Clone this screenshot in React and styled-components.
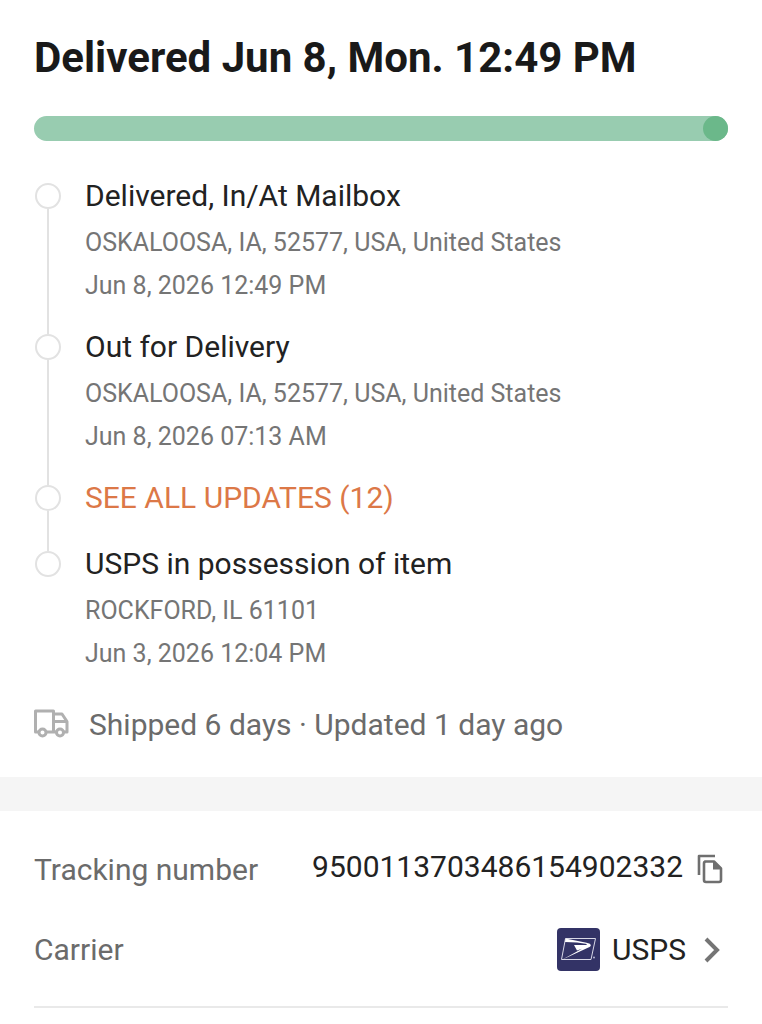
import React from 'react';
import styled, { createGlobalStyle } from 'styled-components';

const GlobalStyle = createGlobalStyle`
  body {
    margin: 0;
    background: #fff;
    color: #222;
    font-family: Roboto, "Liberation Sans", sans-serif;
  }
`;
const Section = styled.section`
  padding: ${(props) => props.$padding};
`;
const Heading = styled.h1`
  margin: 0;
  font-size: 42px;
  line-height: 50px;
  font-weight: 700;
  color: #191919;
`;
const Track = styled.div`
  display: flex;
  justify-content: flex-end;
  height: 25px;
  margin-top: 33px;
  border-radius: 13px;
  background: #98ccb0;
`;
const Knob = styled.span`
  width: 25px;
  height: 25px;
  border-radius: 50%;
  background: #6bb88a;
`;
const Timeline = styled.ol`
  list-style: none;
  margin: 35px 0 0;
  padding: 0;
`;
const Step = styled.li`
  display: flex;
  gap: 24px;
`;
const Rail = styled.div`
  display: flex;
  flex-direction: column;
  align-items: center;
  width: 27px;
`;
const Line = styled.span`
  width: 2px;
  height: 7px;
  flex-grow: ${(props) => (props.$grow ? 1 : 0)};
  background: ${(props) => (props.$hidden ? 'transparent' : '#e2e2e2')};
`;
const Dot = styled.span`
  box-sizing: border-box;
  width: 26px;
  height: 26px;
  flex-shrink: 0;
  border: 2px solid #e2e2e2;
  border-radius: 50%;
`;
const StepBody = styled.div`
  flex: 1;
  padding-bottom: ${(props) => props.$gap}px;
`;
const StepTitle = styled.h2`
  margin: 0 0 5px;
  font-size: 30px;
  line-height: 40px;
  font-weight: 400;
`;
const StepDetail = styled.p`
  margin: 0;
  font-size: 25px;
  line-height: 43px;
  color: #757575;
`;
const SeeAll = styled.button`
  display: block;
  padding: 0;
  border: 0;
  background: none;
  color: #dc7847;
  font: inherit;
  font-size: 30px;
  line-height: 40px;
  cursor: pointer;
`;
const Summary = styled.p`
  display: flex;
  align-items: center;
  gap: 20px;
  margin: 30px 0 0;
  font-size: 30px;
  line-height: 40px;
  color: #6b6b6b;
`;
const Divider = styled.div`
  height: 34px;
  background: #f5f5f5;
`;
const Details = styled.dl`
  margin: 0;
  padding-bottom: 35px;
  border-bottom: 2px solid #e9e9e9;
  font-size: 30px;
  line-height: 40px;
`;
const DetailRow = styled.div`
  display: flex;
  justify-content: space-between;
  align-items: ${(props) => props.$align || 'center'};
  & + & {
    margin-top: 38px;
  }
`;
const Label = styled.dt`
  color: #6b6b6b;
`;
const Value = styled.dd`
  display: flex;
  align-items: flex-end;
  gap: 14px;
  margin: 0;
  line-height: 34px;
`;
const CopyButton = styled.button`
  display: flex;
  padding: 0 5px 0 0;
  border: 0;
  background: none;
  cursor: pointer;
`;
const CarrierLink = styled.a`
  display: flex;
  align-items: center;
  gap: 12px;
  color: inherit;
  text-decoration: none;
`;

const TruckIcon = () => (
  <svg width="35" height="32" viewBox="0 0 35 32" fill="none" stroke="#b0b0b0" strokeWidth="3" strokeLinejoin="round" aria-hidden="true">
    <path d="M5 23H1.500V2H19.500v21M12.500 23h10M19.500 5h8.500l5 7.500V23h-3M19.500 12.500H33" />
    <circle cx="8.500" cy="23.500" r="3.500" />
    <circle cx="26" cy="23.500" r="3.500" />
  </svg>
);

const CopyIcon = () => (
  <svg width="26" height="30" viewBox="0 0 26 30" fill="none" stroke="#6f6f6f" strokeWidth="2.600" strokeLinejoin="round" aria-hidden="true">
    <path d="M2 21V2h16" />
    <path d="M8 7.500h9l7 7V26q0 2-2 2H9q-2 0-2-2V9.500q0-2 2-2z" />
    <path d="M16 7v8.500h8.500z" fill="#6f6f6f" stroke="none" />
  </svg>
);

const UspsLogo = () => (
  <svg width="43" height="43" viewBox="0 0 43 43" aria-hidden="true">
    <rect width="43" height="43" rx="4" fill="#333366" />
    <path d="M8.500 10.500H38.500L34 31.500H4.500z" fill="none" stroke="#d8d8e6" strokeWidth="1" />
    <path d="M8.500 10.500l21 4.200c4.500.9 5.500 2.800 3 4.300L5 31.800l20-11-5 1.700-3-5.500h12c1.500-.3 1-1-.5-1.300L20 14.500l-12-.5z" fill="#fff" />
    <circle cx="37" cy="29.500" r="1" fill="#b8b8d0" />
  </svg>
);

const ChevronIcon = () => (
  <svg width="30" height="30" viewBox="0 0 30 30" fill="none" stroke="#757575" strokeWidth="4" aria-hidden="true">
    <path d="M8 4l11 11L8 26" />
  </svg>
);

const steps = [
  { title: 'Delivered, In/At Mailbox', place: 'OSKALOOSA, IA, 52577, USA, United States', date: 'Jun 8, 2026 12:49 PM' },
  { title: 'Out for Delivery', place: 'OSKALOOSA, IA, 52577, USA, United States', date: 'Jun 8, 2026 07:13 AM' },
  { more: 'SEE ALL UPDATES (12)' },
  { title: 'USPS in possession of item', place: 'ROCKFORD, IL 61101', date: 'Jun 3, 2026 12:04 PM' },
];

const TimelineStep = ({ step, first, last }) => (
  <Step>
    <Rail>
      <Line $hidden={first} />
      <Dot />
      {!last && <Line $grow />}
    </Rail>
    {step.more ? (
      <StepBody $gap={26}>
        <SeeAll type="button">{step.more}</SeeAll>
      </StepBody>
    ) : (
      <StepBody $gap={last ? 0 : 20}>
        <StepTitle>{step.title}</StepTitle>
        <StepDetail>{step.place}</StepDetail>
        <StepDetail>{step.date}</StepDetail>
      </StepBody>
    )}
  </Step>
);

const App = () => (
  <main>
    <GlobalStyle />
    <Section $padding="33px 34px 32px">
      <Heading>Delivered Jun 8, Mon. 12:49 PM</Heading>
      <Track>
        <Knob />
      </Track>
      <Timeline>
        {steps.map((step, i) => (
          <TimelineStep key={i} step={step} first={i === 0} last={i === steps.length - 1} />
        ))}
      </Timeline>
      <Summary>
        <TruckIcon />
        Shipped 6 days · Updated 1 day ago
      </Summary>
    </Section>
    <Divider />
    <Section $padding="39px 34px 16px">
      <Details>
        <DetailRow $align="flex-start">
          <Label>Tracking number</Label>
          <Value>
            9500113703486154902332
            <CopyButton type="button" aria-label="Copy tracking number">
              <CopyIcon />
            </CopyButton>
          </Value>
        </DetailRow>
        <DetailRow>
          <Label>Carrier</Label>
          <Value>
            <CarrierLink href="#carrier">
              <UspsLogo />
              USPS
              <ChevronIcon />
            </CarrierLink>
          </Value>
        </DetailRow>
      </Details>
    </Section>
  </main>
);

export default App;
